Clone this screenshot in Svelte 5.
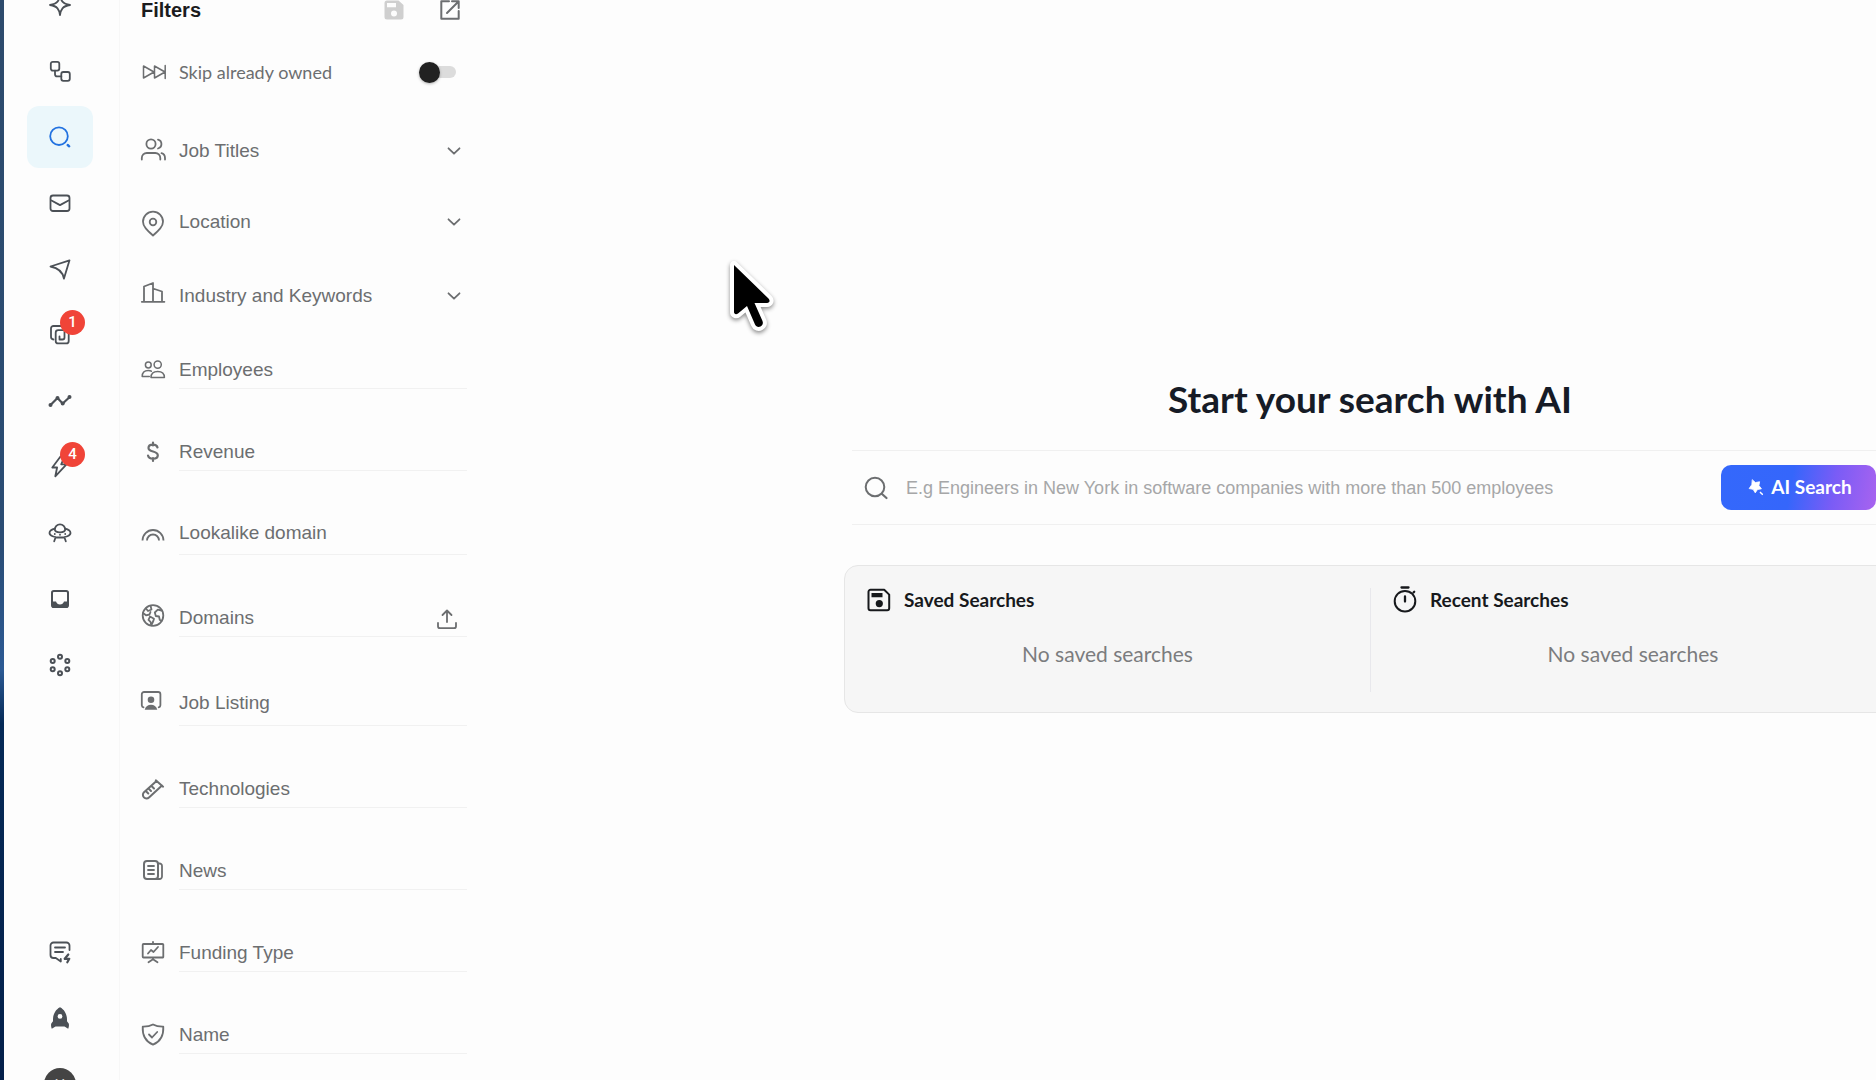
<script>
  const icons = {
    sparkle: '<path d="M12 1.500c.8 6.300 2.500 9.300 10 10.500-7.500 1.200-9.200 4.200-10 10.200-.8-6-2.500-9-10-10.200 7.500-1.200 9.200-4.200 10-10.500z"/>',
    flow: '<rect x="2.800" y="2.800" width="8.500" height="8.800" rx="2"/><rect x="13.300" y="13" width="8.500" height="8.800" rx="2"/><path d="M7 11.600v3.600a2.200 2.200 0 0 0 2.200 2.200h4.100"/>',
    search: '<circle cx="11" cy="11.200" r="8.800"/><path d="M19.700 20l1.500 1.300" stroke-width="2.400"/>',
    mail: '<rect x="2.500" y="4.500" width="19" height="15.500" rx="2.500"/><path d="M3.500 9.500l8.500 4.600 8.500-4.600"/>',
    plane: '<path d="M2.500 9.500L21.500 3.300 15.900 21.700c-.8-5.200-3.400-10.300-13.400-12.200z"/>',
    copy: '<path d="M5.500 16.500A2.800 2.800 0 0 1 3 13.700V5.500A2.500 2.500 0 0 1 5.500 3H15"/><rect x="7.700" y="7.200" width="13" height="13.200" rx="2.500"/><path d="M16.500 7.500v7a2 2 0 0 1-2 2H11.500M11.500 16.500v-3"/>',
    trend: '<path d="M2.500 16l7-7 5.200 5.500 7-6.500" stroke-width="2.200"/><g fill="currentColor" stroke="none"><circle cx="2.500" cy="16" r="2"/><circle cx="9.500" cy="9" r="2"/><circle cx="14.700" cy="14.500" r="2"/><circle cx="21.500" cy="8" r="2"/></g>',
    bolt: '<path d="M12.500 1.500L4.300 12.500h4.800L7.300 21.300l11.200-12h-5.300l3.400-7.800z"/>',
    ufo: '<path d="M6.800 8.600a5.200 5.200 0 0 1 10.400 0c0 2-2.200 2.700-5.200 2.700S6.800 10.600 6.800 8.600z"/><path d="M7 7.600c-3 .7-5.500 2.200-5.500 4.300 0 2.700 4.700 4.600 10.500 4.600s10.500-1.900 10.500-4.600c0-2.100-2.500-3.600-5.500-4.300M7.600 16.300l-1.400 4M16.400 16.300l1.400 4M12 13.700v.1M6.800 12.900v.1M17.200 12.900v.1"/>',
    inbox: '<rect x="4" y="4" width="16" height="16" rx="1.800" stroke-width="2"/><path d="M4 14.500h4c.7 1.700 2 3 4 3s3.300-1.300 4-3h4V19a1.500 1.500 0 0 1-1.500 1.500h-13A1.500 1.500 0 0 1 4 19z" fill="currentColor" stroke="none"/>',
    ring: '<g stroke-width="2"><circle cx="12" cy="3.800" r="2"/><circle cx="19.300" cy="7.900" r="2"/><circle cx="19.300" cy="16.200" r="2"/><circle cx="12" cy="20.300" r="2"/><circle cx="4.700" cy="16.200" r="2"/><circle cx="4.700" cy="7.900" r="2"/></g>',
    chat: '<path d="M21.500 10V5.500a3 3 0 0 0-3-3h-13a3 3 0 0 0-3 3V15a3 3 0 0 0 3 3h2.300l5 3.500V19M7 7.500h10M7 12h8"/><path d="M20.300 14.500l-3.600 4.300h4.600l-2 3.500" stroke-width="2.200"/>',
    rocket: '<path fill="currentColor" stroke="none" fill-rule="evenodd" d="M12 1.200c4.500 2.300 7 7 7 12.300v1.700l1.700 2.300c.5 1.500.3 3.300-.5 5.300l-3.700-2.300h-9L3.800 22.800c-.8-2-1-3.800-.5-5.300L5 15.200v-1.700c0-5.300 2.500-10 7-12.300zM12 8a2.400 2.400 0 1 0 0 4.800A2.400 2.400 0 0 0 12 8z"/>',
    skip: '<path d="M2.500 6v12L13 12zM13.500 6v12L24 12zM24.200 5.500v13" stroke-width="1.500"/>',
    people: '<circle cx="10" cy="5" r="4.600"/><path d="M.8 20.500V19a5 5 0 0 1 5-5h8.500a5 5 0 0 1 5 5v1.500M17 .6a4.600 4.600 0 0 1 0 8.900M20.500 14.200a5 5 0 0 1 3.500 4.800v1.500"/>',
    pin: '<path d="M12 25.500c6-5.300 10-9 10-13.800A10 10 0 0 0 2 11.700C2 16.500 6 20.200 12 25.500z"/><circle cx="12" cy="12" r="3.300"/>',
    building: '<path d="M.8 17.800h22.600M3 17.800V2.500L12 -1v18.800M12 4.500l9 3v10.300"/>',
    group: '<g stroke-width="1.500" transform="translate(0 1)"><circle cx="7.300" cy="7" r="2.900"/><circle cx="16.700" cy="6.600" r="3.600"/><path d="M8.300 18.500H1.200c0-4 2.500-6 6.100-6 1.300 0 2.300.2 3 .7M10 19.500c0-4 2.700-6 6.700-6s6.700 2 6.700 6z"/></g>',
    dollar: '<path d="M16.500 8.500C16 6.400 14.300 5.700 12 5.700c-2.700 0-4.500 1.300-4.500 3.300 0 4.600 9.300 2.500 9.300 7.300 0 2.100-2 3.400-4.800 3.400-2.600 0-4.500-1-5-3.200M12 3.500v3M12 19v3" stroke-width="2.200"/>',
    arc: '<path d="M1.500 17.500a10.500 10.500 0 0 1 21 0M6 17.500a6 6 0 0 1 12 0" stroke-linecap="butt"/>',
    globe: '<circle cx="12" cy="10.500" r="10.300"/><path d="M5 3.500L7 6l3.500-1.500L9.500.8M2 8l3 2.300 3.500-.8 1-2.500M20.500 5.500l-3.700-.8-3 2.800 1 3.500 3.200.5.8 3.500 1.700.8M9 11.500l4 2.200-.7 2.300-2 4.300-.8-3.500-2-2z"/>',
    badge: '<path d="M2.500 16.300A2.200 2.200 0 0 1 .8 14.200V3.300a2.300 2.300 0 0 1 2.300-2.300h14a2.300 2.300 0 0 1 2.300 2.300v10.900a2.200 2.200 0 0 1-1.700 2.100"/><path fill="currentColor" stroke="none" d="M10 5.500a3.300 3.300 0 1 1 0 6.600 3.300 3.300 0 0 1 0-6.600zM3.700 18.700c.8-3.500 3.300-5 6.300-5s5.500 1.500 6.300 5z"/>',
    tube: '<path d="M14.800 4.300l7.300 6.400M15.500 5L3 16.300a3.600 3.600 0 0 0 5 5.200L21 9.500M8 13l2 2M11 10.500l2 2M5.300 15.500l2 2" stroke-width="2"/>',
    news: '<rect x="3" y="3" width="14" height="18" rx="3" stroke-width="2"/><path d="M17 5.500h1.500A2.500 2.500 0 0 1 21 8v10.500a2.500 2.500 0 0 1-2.500 2.500H14M7 8h6M7 12h6M7 16h6"/>',
    board: '<path d="M12 1.800v2M2.500 4h19a.8.800 0 0 1 .8.800v11.900a.8.800 0 0 1-.8.800h-19a.8.800 0 0 1-.8-.8V4.800a.8.800 0 0 1 .8-.8zM12 17.500v2M7.500 22.300l4.500-3 4.500 3M7 13.500l3-3.500 2.500 2 4.500-5"/>',
    shield: '<path d="M12 2.500c3 1.700 6.500 2.300 10.300 2.200.4 8-2.800 14.800-10.300 18C4.500 19.500 1.300 12.700 1.700 4.700 5.500 4.800 9 4.200 12 2.500z"/><path d="M8 12.500l3 3 5.200-5.500"/>',
    save: '<path fill="currentColor" stroke="none" fill-rule="evenodd" d="M5 2.500h11.500l5 4.500v12a2.500 2.500 0 0 1-2.500 2.500H5A2.500 2.500 0 0 1 2.500 19V5A2.500 2.500 0 0 1 5 2.500zM5 5v4.300h9V5zM12 12.500a3 3 0 1 0 0 6 3 3 0 0 0 0-6z"/>',
    external: '<path d="M11 3.300H3.300v17.400h17.400V13M14 3.300h6.700V10M20.500 3.500L9 15" stroke-width="2"/>',
    chevron: '<path d="M6.500 9.300L12 14.700l5.500-5.400" stroke-width="1.800"/>',
    upload: '<path d="M3 17v3.200a2 2 0 0 0 2 2h14a2 2 0 0 0 2-2V17M12 16V5M7.500 9L12 4.500 16.500 9"/>',
    magnifier: '<circle cx="11" cy="11" r="9.300" stroke-width="2"/><path d="M18 18l4.500 4" stroke-width="2.200"/>',
    disk: '<path d="M3.500 1.800h13.700l5 4.800v13.600a2 2 0 0 1-2 2H3.500a2 2 0 0 1-2-2V3.800a2 2 0 0 1 2-2z" stroke-width="2"/><path fill="currentColor" stroke="none" d="M4.500 5h11v4.300h-11zM12.300 12a3.600 3.600 0 1 1 0 7.200 3.600 3.600 0 0 1 0-7.200z"/>',
    timer: '<circle cx="12" cy="13.200" r="10.300" stroke-width="2"/><path d="M8.500 -.5h7M12 8.500v5M20.500 4.500l.7-.7" stroke-width="2.300"/>',
    star: '<path fill="currentColor" stroke-width="1" d="M9 3.500l3.500 3.200 5-1-.8 4.500 3 4-4.700.8-2.700 4-2.600-4.200-4.700-.9L8 9.500z"/><path d="M18.500 18.500l2.300 2.300"/>'
  };

  const primary = [
    { icon: 'sparkle', name: 'Assistant' },
    { icon: 'flow', name: 'Workflows' },
    { icon: 'search', name: 'Search', active: true },
    { icon: 'mail', name: 'Mail' },
    { icon: 'plane', name: 'Campaigns' },
    { icon: 'copy', name: 'Tasks', count: 1 },
    { icon: 'trend', name: 'Analytics' },
    { icon: 'bolt', name: 'Signals', count: 4 },
    { icon: 'ufo', name: 'Agents' },
    { icon: 'inbox', name: 'Inbox' },
    { icon: 'ring', name: 'Integrations' }
  ];
  const secondary = [
    { icon: 'chat', name: 'Feedback' },
    { icon: 'rocket', name: 'Get started' }
  ];

  const groups = [
    { icon: 'people', label: 'Job Titles', size: 'first' },
    { icon: 'pin', label: 'Location', size: 'middle' },
    { icon: 'building', label: 'Industry and Keywords', size: 'last' }
  ];
  const fields = [
    { icon: 'group', label: 'Employees', size: 'short' },
    { icon: 'dollar', label: 'Revenue' },
    { icon: 'arc', label: 'Lookalike domain', size: 'roomy' },
    { icon: 'globe', label: 'Domains', upload: true },
    { icon: 'badge', label: 'Job Listing', size: 'tall' },
    { icon: 'tube', label: 'Technologies' },
    { icon: 'news', label: 'News' },
    { icon: 'board', label: 'Funding Type' },
    { icon: 'shield', label: 'Name' }
  ];

  let skipOwned = $state(false);
  let query = $state('');
</script>

{#snippet glyph(name)}
  <svg class="glyph" viewBox="0 0 24 24" aria-hidden="true">{@html icons[name]}</svg>
{/snippet}

{#snippet navItem(item)}
  <li>
    <a href="#{item.icon}" class:active={item.active} aria-label={item.name}>
      {@render glyph(item.icon)}
      {#if item.count}<span class="count">{item.count}</span>{/if}
    </a>
  </li>
{/snippet}

<div class="app">
  <nav aria-label="Main">
    <ul class="top">
      {#each primary as item}{@render navItem(item)}{/each}
    </ul>
    <ul class="bottom">
      {#each secondary as item}{@render navItem(item)}{/each}
      <li><button class="avatar" aria-label="Account">Y</button></li>
    </ul>
  </nav>

  <aside>
    <header>
      <h2>Filters</h2>
      <button class="save" aria-label="Save filters">{@render glyph('save')}</button>
      <button class="icon-button" aria-label="Open in new window">{@render glyph('external')}</button>
    </header>

    <label class="row skip">
      {@render glyph('skip')}
      <span class="text">Skip already owned</span>
      <input type="checkbox" role="switch" bind:checked={skipOwned} />
    </label>

    {#each groups as group}
      <button class="row group {group.size}" aria-expanded="false">
        {@render glyph(group.icon)}
        <span class="text">{group.label}</span>
        {@render glyph('chevron')}
      </button>
    {/each}

    {#each fields as field}
      <div class="row field {field.size ?? ''}">
        {@render glyph(field.icon)}
        <div class="line">
          <input type="text" placeholder={field.label} aria-label={field.label} />
          {#if field.upload}
            <button class="icon-button upload" aria-label="Upload domains">{@render glyph('upload')}</button>
          {/if}
        </div>
      </div>
    {/each}
  </aside>

  <main>
    <section class="hero">
      <h1>Start your search with AI</h1>
      <form class="search" onsubmit={(e) => e.preventDefault()}>
        {@render glyph('magnifier')}
        <input
          type="text"
          bind:value={query}
          aria-label="Search prompt"
          placeholder="E.g Engineers in New York in software companies with more than 500 employees"
        />
        <button type="submit">{@render glyph('star')}AI Search</button>
      </form>
      <div class="history">
        <section>
          <h3>{@render glyph('disk')}Saved Searches</h3>
          <p>No saved searches</p>
        </section>
        <section>
          <h3>{@render glyph('timer')}Recent Searches</h3>
          <p>No saved searches</p>
        </section>
      </div>
    </section>
  </main>

  <svg class="cursor" viewBox="0 0 56 80" aria-hidden="true">
    <path
      d="M8 8v47c0 2 2 3 4 1.500l9-7.500 8 18.500c1 2.300 3.500 3 5.500 2s3-3 2-5.500L28.500 46H41c2.500 0 3.500-2.500 1.500-4.500z"
    />
  </svg>
</div>

<style>
  :global(body) {
    background: #fdfdfd;
  }
  .app {
    position: relative;
    display: flex;
    height: 100vh;
    overflow: hidden;
    font-family: 'Liberation Sans', Arial, sans-serif;
    color: #6c6e70;
  }
  .app * {
    box-sizing: border-box;
  }
  .app::before {
    content: '';
    flex: none;
    width: 4px;
    background: linear-gradient(#2d4b6c 0%, #2a4c74 50%, #2c5a94 62%, #052a57 67%, #04204a 100%);
  }
  button,
  input {
    margin: 0;
    padding: 0;
    border: 0;
    background: none;
    font: inherit;
    color: inherit;
  }
  input:focus {
    outline: none;
  }
  h1,
  h2,
  h3,
  p,
  ul {
    margin: 0;
    padding: 0;
  }
  .glyph {
    flex: none;
    display: block;
    width: 24px;
    height: 24px;
    overflow: visible;
    fill: none;
    stroke: currentColor;
    stroke-width: 1.8;
    stroke-linecap: round;
    stroke-linejoin: round;
  }

  nav {
    flex: none;
    display: flex;
    flex-direction: column;
    justify-content: space-between;
    width: 116px;
    padding-right: 3px;
    border-right: 1px solid #f7f7f7;
  }
  ul {
    list-style: none;
  }
  .top {
    margin-top: -28px;
  }
  .bottom {
    margin-bottom: -37px;
  }
  li {
    display: grid;
    place-items: center;
    height: 66px;
  }
  nav a {
    position: relative;
    display: grid;
    place-items: center;
    width: 66px;
    height: 62px;
    border-radius: 12px;
    color: #4b5056;
  }
  nav a.active {
    background: #ebf7fb;
    color: #2272e0;
  }
  .count {
    position: absolute;
    top: 6px;
    right: 8px;
    width: 25px;
    height: 25px;
    border-radius: 50%;
    background: #f04438;
    color: #fff;
    font: 500 15px/25px Roboto, sans-serif;
    text-align: center;
  }
  .avatar {
    width: 32px;
    height: 32px;
    border-radius: 50%;
    background: #444;
    color: #ddd;
    font-size: 14px;
  }

  aside {
    flex: none;
    width: 350px;
    padding: 0 3px 0 21px;
    font-size: 19px;
    line-height: 22px;
  }
  header {
    display: flex;
    align-items: center;
    gap: 32px;
    height: 20px;
    padding-right: 5px;
  }
  h2 {
    margin-right: auto;
    font-size: 20px;
    color: #1b1c1e;
  }
  .save {
    color: #cfcfcf;
  }
  .row {
    display: flex;
    align-items: center;
    gap: 14px;
    width: 100%;
    text-align: left;
  }
  .text {
    flex: 1;
  }
  .skip {
    height: 104px;
    margin-bottom: -9px;
    padding-right: 11px;
    font-family: Lato, sans-serif;
    font-size: 18px;
  }
  .skip input {
    appearance: none;
    display: flex;
    align-items: center;
    width: 34px;
    height: 12px;
    border-radius: 6px;
    background: #dcdcdc;
  }
  .skip input::before {
    content: '';
    width: 21px;
    height: 21px;
    margin-left: -3px;
    border-radius: 50%;
    background: #212121;
    box-shadow: 0 1px 3px rgb(0 0 0 / 30%);
  }
  .skip input:checked::before {
    margin-left: 16px;
  }
  .group {
    padding-right: 1px;
  }
  .first {
    height: 72px;
  }
  .middle {
    height: 69px;
  }
  .last {
    height: 80px;
  }
  .field {
    align-items: flex-end;
    height: 82px;
  }
  .field > .glyph {
    margin-bottom: 8px;
  }
  .line {
    flex: 1;
    display: flex;
    align-items: center;
    height: 38px;
    border-bottom: 1px solid #f1f1f1;
  }
  .line input {
    flex: 1;
    min-width: 0;
    height: 22px;
  }
  .upload {
    margin-right: 8px;
  }
  .short {
    height: 53px;
  }
  .roomy {
    height: 84px;
  }
  .roomy .line {
    height: 43px;
  }
  .tall {
    height: 89px;
  }
  .tall .line {
    height: 46px;
  }
  .tall > .glyph {
    margin-bottom: 11px;
  }
  ::placeholder {
    color: inherit;
    opacity: 1;
  }

  main {
    flex: 1;
    display: grid;
    grid-template-columns: minmax(0, 374fr) minmax(0, 1032fr);
    min-width: 0;
  }
  .hero {
    grid-column: 2;
    margin-right: -20px;
    padding-top: 375px;
    font-family: Lato, sans-serif;
  }
  h1 {
    font-size: 37px;
    line-height: 48px;
    text-align: center;
    color: #161b26;
  }
  .search {
    display: flex;
    align-items: center;
    height: 75px;
    margin: 27px 8px 0;
    padding: 0 12px;
    border: solid #f0f0f0;
    border-width: 1px 0;
    color: #6c6e70;
  }
  .search input {
    flex: 1;
    min-width: 0;
    padding: 0 18px;
    font: 18px/24px 'Liberation Sans', Arial, sans-serif;
  }
  .search input::placeholder {
    color: #a6a7a8;
  }
  .search button {
    display: flex;
    align-items: center;
    justify-content: center;
    gap: 6px;
    width: 155px;
    height: 45px;
    padding-bottom: 2px;
    border-radius: 10px;
    background: linear-gradient(100deg, #3468fb 0%, #3566fb 45%, #7a5cf6 72%, #a863ef 100%);
    color: #fff;
    font-size: 19px;
    font-weight: 700;
  }
  .search button .glyph {
    width: 20px;
    height: 20px;
  }
  .history {
    display: grid;
    grid-template-columns: 1fr 1fr;
    height: 148px;
    margin-top: 40px;
    padding: 22px 0 20px;
    border: 1px solid #e6e6e6;
    border-radius: 14px;
    background: #f6f6f6;
  }
  .history section + section {
    border-left: 1px solid #e8e8ec;
  }
  h3 {
    display: flex;
    align-items: center;
    gap: 13px;
    padding-left: 22px;
    font-size: 19px;
    line-height: 24px;
    color: #17191c;
  }
  .history p {
    margin-top: 30px;
    font-size: 21px;
    line-height: 24px;
    text-align: center;
    color: #7b7c7e;
  }

  .cursor {
    position: absolute;
    left: 726px;
    top: 257px;
    width: 56px;
    height: 80px;
    overflow: visible;
    fill: #000;
    stroke: #fff;
    stroke-width: 8;
    stroke-linejoin: round;
    paint-order: stroke;
    filter: drop-shadow(0 2px 2px rgb(0 0 0 / 45%));
  }
</style>
